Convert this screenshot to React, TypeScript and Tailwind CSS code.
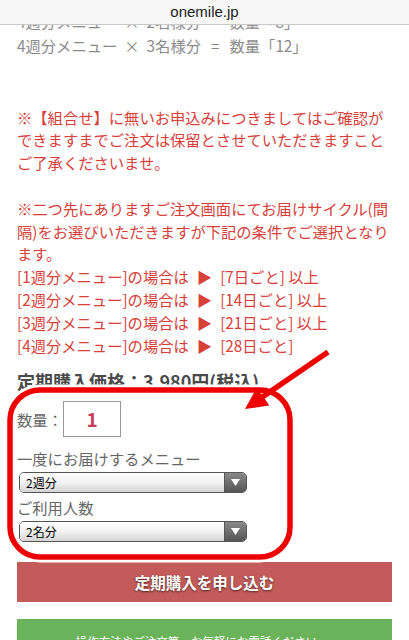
const jp = { fontFamily: '"Noto Sans CJK JP", "Noto Sans", sans-serif' };

function Select({ value }: { value: string }) {
  return (
    <div className="flex h-[21px] w-[228px] ml-[2px] rounded-[5px] border border-[#555] overflow-hidden">
      <div className="flex-1 flex items-center pl-[6px] text-[12px] text-black bg-gradient-to-b from-white via-[#f2f2f2] to-[#d4d4d4]">
        {value}
      </div>
      <div className="w-[22px] flex items-center justify-center bg-gradient-to-b from-[#8a8a8a] to-[#555] border-l border-[#555]">
        <svg width="9" height="7" viewBox="0 0 9 7">
          <polygon points="0,0 9,0 4.5,7" fill="#fff" />
        </svg>
      </div>
    </div>
  );
}

function CycleLine({ n, days, more }: { n: number; days: number; more?: boolean }) {
  return (
    <div className="text-[15.3px] leading-[22.8px] text-[#d8403a] whitespace-nowrap">
      [{n}週分メニュー]の場合は<span className="mx-[8px]">▶</span>[{days}日ごと]{more ? " 以上" : ""}
    </div>
  );
}

export default function App() {
  const gray = "text-[15.3px] leading-[24px] text-[#8a8a8a] whitespace-nowrap";
  const red = "text-[15.3px] leading-[22.8px] text-[#d8403a] whitespace-nowrap";
  return (
    <div className="relative w-[409px] h-[640px] overflow-hidden bg-white" style={jp}>
      <div
        className="h-[25px] bg-[#f7f7f7] border-b border-[#c8c8c8] flex items-center justify-center text-[15px] text-[#222]"
        style={{ fontFamily: '"Liberation Sans", Arial, sans-serif' }}
      >
        onemile.jp
      </div>
      <div className="h-[615px] overflow-hidden px-[17px]">
        <div className="-mt-[16px]">
          <div className={gray}>
            4週分メニュー<span className="mx-[7px]">×</span>2名様分<span className="mx-[10px]">=</span>数量「8」
          </div>
          <div className={gray}>
            4週分メニュー<span className="mx-[7px]">×</span>3名様分<span className="mx-[10px]">=</span>数量「12」
          </div>

          <div className="mt-[48.6px]">
            <div className={red}>※【組合せ】に無いお申込みにつきましてはご確認が</div>
            <div className={red}>できますまでご注文は保留とさせていただきますこと</div>
            <div className={red}>ご了承くださいませ。</div>
            <div className="h-[22.8px]" />
            <div className={red}>※二つ先にありますご注文画面にてお届けサイクル(間</div>
            <div className={red}>隔)をお選びいただきますが下記の条件でご選択となり</div>
            <div className={red}>ます。</div>
            <CycleLine n={1} days={7} more />
            <CycleLine n={2} days={14} more />
            <CycleLine n={3} days={21} more />
            <CycleLine n={4} days={28} />
          </div>

          <div className="mt-[13px] text-[18px] leading-[24px] font-bold text-[#4a4a4a] whitespace-nowrap">
            定期購入価格：3,980円(税込)
          </div>

          <div className="mt-[8px] flex items-center">
            <span className="w-[46px] text-[15.3px] text-[#666]">数量：</span>
            <div className="w-[58px] h-[36px] border border-[#999] flex items-center justify-center text-[19px] font-bold text-[#c63c58]">
              1
            </div>
          </div>

          <div className="mt-[10px] text-[15.3px] leading-[22px] text-[#666]">一度にお届けするメニュー</div>
          <div className="mt-[3px]">
            <Select value="2週分" />
          </div>
          <div className="mt-[3px] text-[15.3px] leading-[22px] text-[#666]">ご利用人数</div>
          <div className="mt-[3px]">
            <Select value="2名分" />
          </div>

          <div className="mt-[20px] h-[40px] bg-[#c25b5a] flex items-center justify-center text-[15.5px] font-bold text-white [text-shadow:0_1px_2px_rgba(0,0,0,0.6)]">
            定期購入を申し込む
          </div>
          <div className="mt-[17px] h-[40px] bg-[#6ab35b] flex justify-center pt-[14px] pr-[16px] text-[11.5px] leading-[16px] text-white whitespace-nowrap">
            操作方法やご注文等、お気軽にお電話ください
          </div>
        </div>
      </div>

      <svg className="absolute inset-0 pointer-events-none" width="409" height="640" viewBox="0 0 409 640">
        <rect x="10" y="390" width="280" height="167" rx="30" fill="none" stroke="#fff" strokeWidth="11" />
        <line x1="328" y1="352" x2="258" y2="400" stroke="#fff" strokeWidth="10" />
        <polygon points="245,409 256.9,387.4 269.3,405.6" fill="#fff" stroke="#fff" strokeWidth="5" strokeLinejoin="round" />
        <rect x="10" y="390" width="280" height="167" rx="30" fill="none" stroke="#ee0000" strokeWidth="5.5" />
        <line x1="328" y1="352" x2="258" y2="400" stroke="#ee0000" strokeWidth="5.5" />
        <polygon points="245,409 256.9,387.4 269.3,405.6" fill="#ee0000" />
      </svg>
    </div>
  );
}
